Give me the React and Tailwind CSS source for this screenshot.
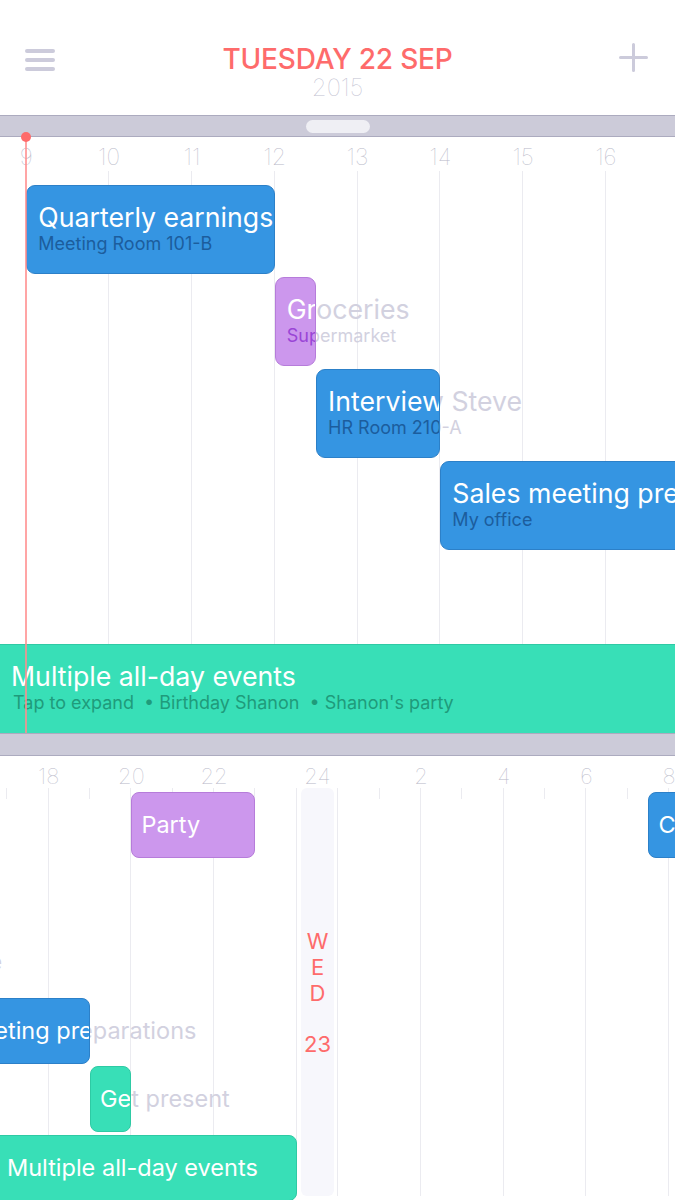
import React from "react";

const BLUE = { bg: "bg-[#3595e2]", border: "border-[#2c80c8]", sub: "text-[#1c5d9d]" };
const PURPLE = { bg: "bg-[#cc97ed]", border: "border-[#b67cda]", sub: "text-[#9a45d6]" };
const TEAL = { bg: "bg-[#38dfb7]", border: "border-[#2ecaa4]", sub: "text-[#1f9b7b]" };

const topX = (h) => 26.3 + (h - 9) * 82.8;
const botX = (h) => (h <= 24 ? 48.7 + (h - 18) * 41.35 : 338.3 + (h - 24) * 41.35);

const topEvents = [
  { s: 9, e: 12, row: 0, title: "Quarterly earnings", sub: "Meeting Room 101-B", c: BLUE },
  { s: 12, e: 12.5, row: 1, title: "Groceries", sub: "Supermarket", c: PURPLE },
  { s: 12.5, e: 14, row: 2, title: "Interview Steve", sub: "HR Room 210-A", c: BLUE },
  { s: 14, e: 19, row: 3, title: "Sales meeting preparations", sub: "My office", c: BLUE },
];

const botEvents = [
  { s: 9, e: 12, row: 0, title: "Quarterly earnings", c: BLUE },
  { s: 12, e: 12.5, row: 1, title: "Groceries", c: PURPLE },
  { s: 12.5, e: 14, row: 2, title: "Interview Steve", c: BLUE },
  { s: 14, e: 19, row: 3, title: "Sales meeting preparations", c: BLUE },
  { s: 19, e: 20, row: 4, title: "Get present", c: TEAL },
  { s: 20, e: 23, row: 0, title: "Party", c: PURPLE },
  { s: 31.5, e: 33, row: 0, title: "Call Jim", c: BLUE },
];

function TopEvent({ ev }) {
  const left = topX(ev.s);
  const width = topX(ev.e) - left;
  const top = 48 + ev.row * 92;
  const pad = 12;
  return (
    <>
      <div
        className="absolute whitespace-nowrap text-[#d2d1df]"
        style={{ left: left + pad, top: top + 17 }}
      >
        <div className="text-[26.7px] leading-[30px]">{ev.title}</div>
        <div className="text-[18px] leading-[20px] mt-[2px]">{ev.sub}</div>
      </div>
      <div
        className={`absolute overflow-hidden rounded-[9px] border ${ev.c.bg} ${ev.c.border}`}
        style={{ left, top, width, height: 89 }}
      >
        <div className="absolute whitespace-nowrap" style={{ left: pad - 1, top: 16 }}>
          <div className="text-[26.7px] leading-[30px] text-white">{ev.title}</div>
          <div className={`text-[18px] leading-[20px] mt-[2px] ${ev.c.sub}`}>{ev.sub}</div>
        </div>
      </div>
    </>
  );
}

function BotEvent({ ev }) {
  const left = botX(ev.s);
  const width = botX(ev.e) - left;
  const top = 36 + ev.row * 68.5;
  const pad = 10;
  return (
    <>
      <div
        className="absolute whitespace-nowrap text-[#d2d1df] text-[23.5px] leading-[66px]"
        style={{ left: left + pad, top }}
      >
        {ev.title}
      </div>
      <div
        className={`absolute overflow-hidden rounded-[8px] border ${ev.c.bg} ${ev.c.border}`}
        style={{ left, top, width, height: 66 }}
      >
        <div
          className="absolute whitespace-nowrap text-white text-[23.5px] leading-[64px]"
          style={{ left: pad - 1, top: 0 }}
        >
          {ev.title}
        </div>
      </div>
    </>
  );
}

export default function App() {
  const topHours = [9, 10, 11, 12, 13, 14, 15, 16, 17];
  const botLabels = [
    { h: 18, t: "18" },
    { h: 20, t: "20" },
    { h: 22, t: "22" },
    { h: 26, t: "2" },
    { h: 28, t: "4" },
    { h: 30, t: "6" },
    { h: 32, t: "8" },
  ];
  const botLong = [16, 18, 20, 22, 24, 24.0001, 26, 28, 30, 32];
  const botShort = [17, 19, 21, 23, 25, 27, 29, 31];

  return (
    <div className="relative w-[675px] h-[1200px] overflow-hidden bg-white flex flex-col [font-family:Inter,'Noto_Sans',sans-serif]">
      {/* Header */}
      <div className="flex items-start h-[115px] shrink-0">
        <div className="w-[120px] pl-[25px] pt-[49px] flex flex-col gap-[5px]">
          <div className="w-[30px] h-[4px] rounded-full bg-[#cccbdb]" />
          <div className="w-[30px] h-[4px] rounded-full bg-[#cccbdb]" />
          <div className="w-[30px] h-[4px] rounded-full bg-[#cccbdb]" />
        </div>
        <div className="flex-1 flex flex-col items-center pt-[43px]">
          <div className="text-[28px] leading-[33px] font-medium text-[#fe6b6b] tracking-[-0.2px]">TUESDAY 22 SEP</div>
          <div className="text-[24px] leading-[28px] font-thin text-[#c2c1d1] -mt-[2px]">2015</div>
        </div>
        <div className="w-[120px] flex justify-end pr-[27px] pt-[43px]">
          <svg width="29" height="29" viewBox="0 0 29 29" fill="none">
            <path d="M14.5 1.5V27.5M1.5 14.5H27.5" stroke="#cccbdb" strokeWidth="3" strokeLinecap="round" />
          </svg>
        </div>
      </div>

      {/* Drag bar */}
      <div className="h-[22px] shrink-0 bg-[#cccbd9] border-y border-[#acabbf] flex items-center justify-center">
        <div className="w-[64px] h-[13px] rounded-full bg-[#efeff4]" />
      </div>

      {/* Top day timeline */}
      <div className="relative h-[507px] shrink-0">
        {topHours.map((h) => (
          <div
            key={h}
            className="absolute top-[8px] -translate-x-1/2 text-[23px] leading-[24px] font-thin text-[#b9b9c9]"
            style={{ left: topX(h) }}
          >
            {h}
          </div>
        ))}
        {topHours.slice(1).map((h) => (
          <div
            key={"l" + h}
            className="absolute top-[34px] bottom-0 w-px bg-[#ebebf0]"
            style={{ left: Math.round(topX(h)) - 1 }}
          />
        ))}
        {topEvents.map((ev) => (
          <TopEvent key={ev.title} ev={ev} />
        ))}
      </div>

      {/* All-day bar */}
      <div className="h-[89px] shrink-0 bg-[#38dfb7] border-t border-[#2fcaa5] pl-[11px] pt-[16px]">
        <div className="text-[26.7px] leading-[30px] text-white whitespace-nowrap">Multiple all-day events</div>
        <div className="text-[18px] leading-[20px] mt-[2px] text-[#1f9b7b] whitespace-nowrap pl-[2px]">
          Tap to expand&nbsp;&nbsp;•&nbsp;Birthday Shanon&nbsp;&nbsp;•&nbsp;Shanon's party
        </div>
      </div>

      {/* Second drag bar */}
      <div className="h-[23px] shrink-0 bg-[#cccbd9] border-y border-[#acabbf]" />

      {/* Bottom multi-day timeline */}
      <div className="relative flex-1">
        {botLabels.map((l) => (
          <div
            key={l.t}
            className="absolute top-[8px] -translate-x-1/2 text-[22px] leading-[24px] font-thin text-[#b9b9c9]"
            style={{ left: botX(l.h) }}
          >
            {l.t}
          </div>
        ))}
        <div className="absolute top-[8px] left-[317.5px] -translate-x-1/2 text-[22px] leading-[24px] font-thin text-[#b9b9c9]">
          24
        </div>
        {botLong.map((h, i) => (
          <div
            key={"bl" + i}
            className="absolute top-[32px] h-[408px] w-px bg-[#ebebf0]"
            style={{ left: Math.round(botX(h)) - 1 }}
          />
        ))}
        {botShort.map((h) => (
          <div
            key={"bs" + h}
            className="absolute top-[32px] h-[11px] w-px bg-[#ebebf0]"
            style={{ left: Math.round(botX(h)) - 1 }}
          />
        ))}
        {/* Day divider column */}
        <div className="absolute left-[301px] w-[33px] top-[32px] h-[408px] rounded-[6px] bg-[#f7f7fc] flex flex-col items-center pt-[140px] text-[#fe6b6b] text-[22px] leading-[26px]">
          <div>W</div>
          <div>E</div>
          <div>D</div>
          <div className="mt-[25px]">23</div>
        </div>
        {botEvents.map((ev) => (
          <BotEvent key={ev.title + ev.row} ev={ev} />
        ))}
        {/* all-day event in bottom */}
        <div
          className="absolute overflow-hidden rounded-[8px] border bg-[#38dfb7] border-[#2ecaa4] flex items-center"
          style={{ left: -40, top: 36 + 5 * 68.5, width: botX(24) + 40, height: 66 }}
        >
          <div className="pl-[46px] text-white text-[23.5px] whitespace-nowrap">Multiple all-day events</div>
        </div>
      </div>

      {/* Now line */}
      <div className="absolute left-[25px] top-[137px] h-[596px] w-[2px] bg-[#ff8e8e]/80" />
      <div className="absolute left-[21px] top-[132px] w-[10px] h-[10px] rounded-full bg-[#fe6b6b]" />
    </div>
  );
}
